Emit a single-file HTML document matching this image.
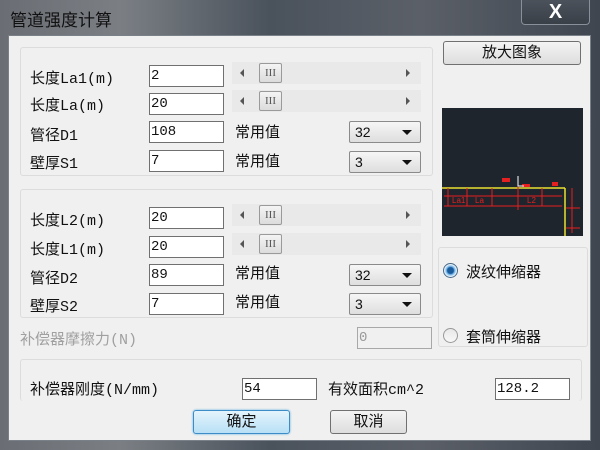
<!DOCTYPE html>
<html><head><meta charset="utf-8"><style>
*{margin:0;padding:0;box-sizing:border-box}
body{width:600px;height:450px;overflow:hidden;background:#3a4048;position:relative;font-family:"Liberation Sans","Noto Sans CJK SC",sans-serif;font-size:14px;color:#111}
.a{position:absolute}
.frame{left:0;top:0;width:600px;height:450px;background:linear-gradient(90deg,#6a6e74 0%,#7b7f84 20%,#4a525c 45%,#5b6068 70%,#3f4650 100%)}
.title{left:10px;top:6px;font-size:17px;color:#111}
.close{left:521px;top:0;width:69px;height:25px;border:1px solid #8a9099;border-top:none;border-radius:0 0 4px 4px;background:linear-gradient(#4b525b,#3a4048);color:#fff;text-align:center;font-size:20px;font-weight:bold;line-height:24px}
.client{left:8px;top:35px;width:583px;height:406px;background:#f0f0f0;border:1px solid #7a8088}
.grp{border:1px solid #dcdcdc;border-radius:3px;background:#f0f0f0}
.lbl{font-family:"Liberation Mono","Noto Sans CJK SC",monospace;font-size:15px}
.tb{background:#fff;border:1px solid #707070;height:22px;width:75px;font-family:"Liberation Mono",monospace;font-size:14px;padding:2px 0 0 1px}
.sb{width:189px;height:22px;background:#e9e9e9}
.sb .th{position:absolute;left:27px;top:1px;width:23px;height:20px;border:1px solid #9a9a9a;border-radius:2px;background:linear-gradient(#f4f4f4,#dcdcdc);font-family:"Liberation Serif",serif;font-size:11px;text-align:center;line-height:18px;color:#555;letter-spacing:0}
.sb .l{position:absolute;left:8px;top:7px;width:0;height:0;border-right:4px solid #555;border-top:4px solid transparent;border-bottom:4px solid transparent}
.sb .r{position:absolute;right:11px;top:7px;width:0;height:0;border-left:4px solid #555;border-top:4px solid transparent;border-bottom:4px solid transparent}
.cb{width:72px;height:22px;border:1px solid #8a8a8a;border-radius:2px;background:linear-gradient(#f6f6f6,#dedede);font-size:14px;padding:2px 0 0 5px}
.cb:after{content:"";position:absolute;right:8px;top:8px;border-top:5px solid #111;border-left:5px solid transparent;border-right:5px solid transparent}
.btn{border:1px solid #707070;border-radius:3px;background:linear-gradient(#f4f4f4,#dddddd);text-align:center;font-size:15px}
</style></head><body>
<div class="a frame"></div>
<div class="a title">管道强度计算</div>
<div class="a close">X</div>
<div class="a client"></div>

<div class="a grp" style="left:20px;top:47px;width:413px;height:129px"></div>
<div class="a grp" style="left:20px;top:189px;width:413px;height:129px"></div>
<div class="a grp" style="left:438px;top:247px;width:150px;height:100px"></div>
<div class="a grp" style="left:20px;top:359px;width:562px;height:42px;border-bottom:none"></div>

<div class="a btn" style="left:443px;top:41px;width:138px;height:24px;line-height:22px">放大图象</div>
<svg class="a" style="left:442px;top:108px" width="141" height="128" viewBox="0 0 141 128">
<rect width="141" height="128" fill="#1f252c"/>
<line x1="0" y1="80" x2="123" y2="80" stroke="#e8e030" stroke-width="1.5"/>
<line x1="123" y1="80" x2="123" y2="128" stroke="#e8e030" stroke-width="1.5"/>
<g stroke="#e52020" fill="none" stroke-width="1">
<line x1="2" y1="88" x2="120" y2="88"/><line x1="2" y1="98" x2="120" y2="98"/>
<line x1="6" y1="80" x2="6" y2="98"/><line x1="25" y1="80" x2="25" y2="98"/><line x1="50" y1="80" x2="50" y2="98"/>
<line x1="76" y1="76" x2="76" y2="102"/><line x1="100" y1="80" x2="100" y2="98"/>
<line x1="130" y1="80" x2="130" y2="125"/><line x1="124" y1="100" x2="138" y2="100"/><line x1="124" y1="120" x2="138" y2="120"/>
<text x="10" y="95" fill="#e52020" font-size="8" stroke="none">La1</text>
<text x="33" y="95" fill="#e52020" font-size="8" stroke="none">La</text>
<text x="85" y="95" fill="#e52020" font-size="8" stroke="none">L2</text>
<rect x="60" y="70" width="8" height="4" fill="#e52020" stroke="none"/>
<rect x="110" y="74" width="6" height="4" fill="#e52020" stroke="none"/>
<rect x="80" y="76" width="8" height="3" fill="#e52020" stroke="none"/>
</g>
<path d="M76 68 V78 H82" stroke="#fff" fill="none"/>
</svg>

<div class="a lbl" style="left:30px;top:67px">长度La1(m)</div>
<div class="a lbl" style="left:30px;top:94px">长度La(m)</div>
<div class="a lbl" style="left:30px;top:124px">管径D1</div>
<div class="a lbl" style="left:30px;top:152px">壁厚S1</div>
<div class="a tb" style="left:149px;top:65px">2</div>
<div class="a tb" style="left:149px;top:93px">20</div>
<div class="a tb" style="left:149px;top:121px">108</div>
<div class="a tb" style="left:149px;top:150px">7</div>
<div class="a sb" style="left:232px;top:62px"><i class="l"></i><div class="th">III</div><i class="r"></i></div>
<div class="a sb" style="left:232px;top:90px"><i class="l"></i><div class="th">III</div><i class="r"></i></div>
<div class="a" style="left:235px;top:121px;font-size:15px">常用值</div>
<div class="a" style="left:235px;top:150px;font-size:15px">常用值</div>
<div class="a cb" style="left:349px;top:121px">32</div>
<div class="a cb" style="left:349px;top:151px">3</div>

<div class="a lbl" style="left:30px;top:209px">长度L2(m)</div>
<div class="a lbl" style="left:30px;top:238px">长度L1(m)</div>
<div class="a lbl" style="left:30px;top:267px">管径D2</div>
<div class="a lbl" style="left:30px;top:295px">壁厚S2</div>
<div class="a tb" style="left:149px;top:207px">20</div>
<div class="a tb" style="left:149px;top:236px">20</div>
<div class="a tb" style="left:149px;top:264px">89</div>
<div class="a tb" style="left:149px;top:293px">7</div>
<div class="a sb" style="left:232px;top:204px"><i class="l"></i><div class="th">III</div><i class="r"></i></div>
<div class="a sb" style="left:232px;top:233px"><i class="l"></i><div class="th">III</div><i class="r"></i></div>
<div class="a" style="left:235px;top:262px;font-size:15px">常用值</div>
<div class="a" style="left:235px;top:291px;font-size:15px">常用值</div>
<div class="a cb" style="left:349px;top:264px">32</div>
<div class="a cb" style="left:349px;top:293px">3</div>

<div class="a lbl" style="left:20px;top:328px;color:#a0a0a0">补偿器摩擦力(N)</div>
<div class="a tb" style="left:357px;top:327px;background:#f0f0f0;border-color:#a8a8a8;color:#999">0</div>

<div class="a" style="left:443px;top:263px;width:15px;height:15px;border-radius:50%;border:1px solid #4a6a8a;background:radial-gradient(circle,#1a5a9a 0 3px,#6ab0e8 4px,#e8f2fa 6px)"></div>
<div class="a" style="left:466px;top:261px;font-size:15px">波纹伸缩器</div>
<div class="a" style="left:443px;top:328px;width:15px;height:15px;border-radius:50%;border:1px solid #999;background:linear-gradient(#e8e8e8,#f8f8f8)"></div>
<div class="a" style="left:466px;top:326px;font-size:15px">套筒伸缩器</div>

<div class="a lbl" style="left:30px;top:378px">补偿器刚度(N/mm)</div>
<div class="a tb" style="left:242px;top:378px">54</div>
<div class="a lbl" style="left:328px;top:378px">有效面积cm^2</div>
<div class="a tb" style="left:495px;top:378px">128.2</div>

<div class="a btn" style="left:193px;top:410px;width:97px;height:24px;line-height:22px;border-color:#3c8cc8;background:linear-gradient(#e4f4fc,#b8e0f6);box-shadow:0 0 2px #5cb0e0">确定</div>
<div class="a btn" style="left:330px;top:410px;width:77px;height:24px;line-height:22px">取消</div>
</body></html>
